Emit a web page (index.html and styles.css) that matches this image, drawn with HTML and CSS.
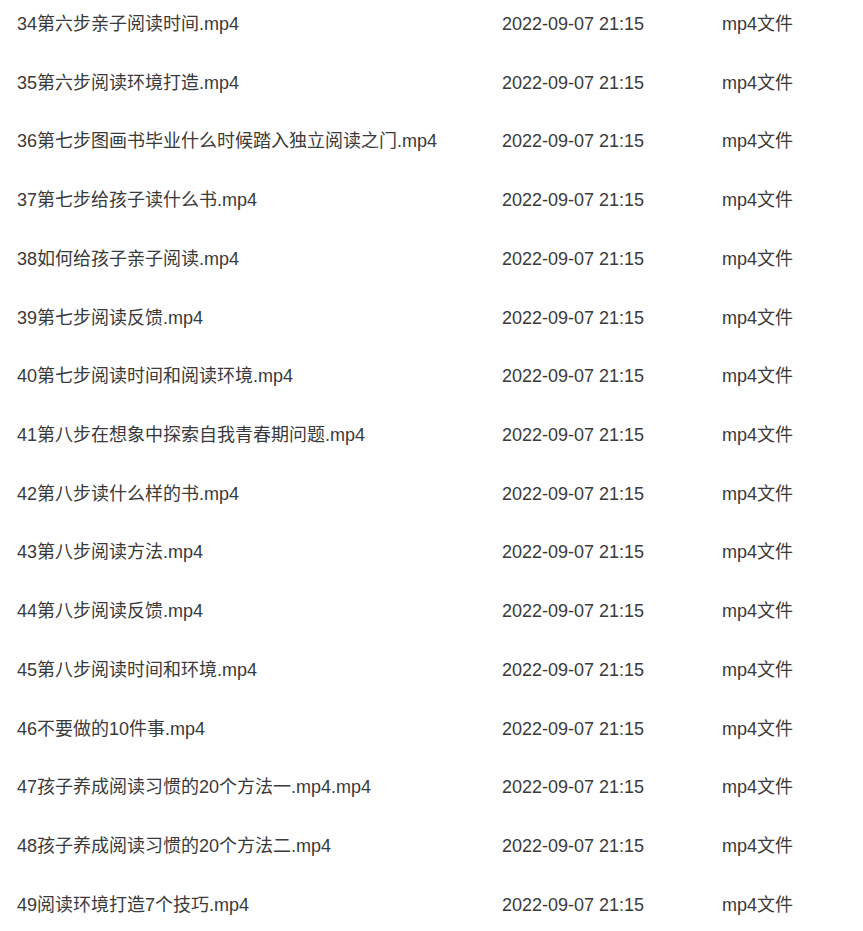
FILE: index.html
```html
<!DOCTYPE html>
<html lang="zh-CN">
<head>
<meta charset="utf-8">
<title>文件列表</title>
<link rel="stylesheet" href="styles.css">
</head>
<body>
<div class="list">
  <div class="row"><span class="name">34第六步亲子阅读时间.mp4</span><span class="date">2022-09-07 21:15</span><span class="type">mp4文件</span></div>
  <div class="row"><span class="name">35第六步阅读环境打造.mp4</span><span class="date">2022-09-07 21:15</span><span class="type">mp4文件</span></div>
  <div class="row"><span class="name">36第七步图画书毕业什么时候踏入独立阅读之门.mp4</span><span class="date">2022-09-07 21:15</span><span class="type">mp4文件</span></div>
  <div class="row"><span class="name">37第七步给孩子读什么书.mp4</span><span class="date">2022-09-07 21:15</span><span class="type">mp4文件</span></div>
  <div class="row"><span class="name">38如何给孩子亲子阅读.mp4</span><span class="date">2022-09-07 21:15</span><span class="type">mp4文件</span></div>
  <div class="row"><span class="name">39第七步阅读反馈.mp4</span><span class="date">2022-09-07 21:15</span><span class="type">mp4文件</span></div>
  <div class="row"><span class="name">40第七步阅读时间和阅读环境.mp4</span><span class="date">2022-09-07 21:15</span><span class="type">mp4文件</span></div>
  <div class="row"><span class="name">41第八步在想象中探索自我青春期问题.mp4</span><span class="date">2022-09-07 21:15</span><span class="type">mp4文件</span></div>
  <div class="row"><span class="name">42第八步读什么样的书.mp4</span><span class="date">2022-09-07 21:15</span><span class="type">mp4文件</span></div>
  <div class="row"><span class="name">43第八步阅读方法.mp4</span><span class="date">2022-09-07 21:15</span><span class="type">mp4文件</span></div>
  <div class="row"><span class="name">44第八步阅读反馈.mp4</span><span class="date">2022-09-07 21:15</span><span class="type">mp4文件</span></div>
  <div class="row"><span class="name">45第八步阅读时间和环境.mp4</span><span class="date">2022-09-07 21:15</span><span class="type">mp4文件</span></div>
  <div class="row"><span class="name">46不要做的10件事.mp4</span><span class="date">2022-09-07 21:15</span><span class="type">mp4文件</span></div>
  <div class="row"><span class="name">47孩子养成阅读习惯的20个方法一.mp4.mp4</span><span class="date">2022-09-07 21:15</span><span class="type">mp4文件</span></div>
  <div class="row"><span class="name">48孩子养成阅读习惯的20个方法二.mp4</span><span class="date">2022-09-07 21:15</span><span class="type">mp4文件</span></div>
  <div class="row"><span class="name">49阅读环境打造7个技巧.mp4</span><span class="date">2022-09-07 21:15</span><span class="type">mp4文件</span></div>
</div>
</body>
</html>
```
FILE: styles.css
```css
html, body {
  margin: 0;
  padding: 0;
  background: #ffffff;
}
body {
  width: 863px;
  height: 931px;
  overflow: hidden;
  font-family: "Liberation Sans", "Noto Sans CJK SC", sans-serif;
  font-size: 18px;
  color: #3a3a3a;
}
.list {
  display: flex;
  flex-direction: column;
  padding: 12px 0 0 17px;
}
.row {
  display: grid;
  grid-template-columns: 485px 220px 1fr;
  height: 58.73px;
  line-height: 24px;
  align-items: start;
  white-space: nowrap;
}
```
